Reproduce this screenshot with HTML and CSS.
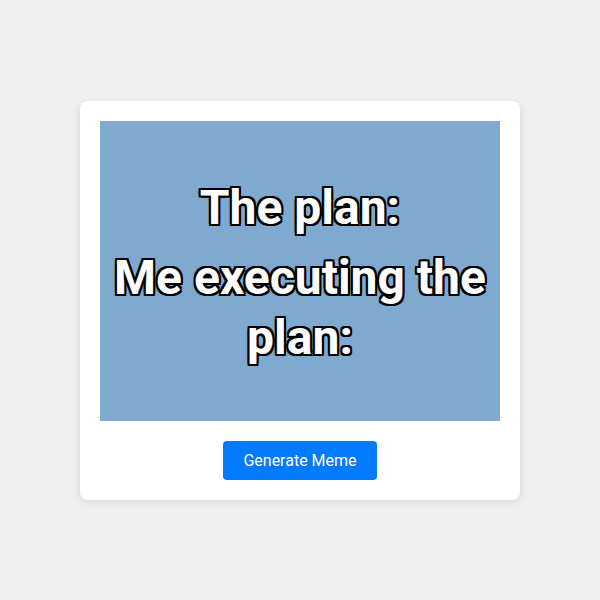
FILE: index.html
```html
<!DOCTYPE html>
<html>
<head>
<meta charset="utf-8">
<link rel="stylesheet" href="styles.css">
</head>
<body>
<div class="card">
  <div class="meme">
    <div class="meme-text">The plan:</div>
    <div class="meme-text">Me executing the plan:</div>
  </div>
  <button class="btn">Generate Meme</button>
</div>
</body>
</html>
```
FILE: styles.css
```css
html, body {
  margin: 0;
  padding: 0;
}
body {
  background: #f0f0f0;
  font-family: Roboto, "Liberation Sans", sans-serif;
  width: 600px;
  height: 600px;
  display: flex;
  align-items: center;
  justify-content: center;
}
.card {
  width: 400px;
  padding: 20px;
  background: #fff;
  border-radius: 8px;
  box-shadow: 0 2px 10px rgba(0, 0, 0, 0.1);
  display: flex;
  flex-direction: column;
  align-items: center;
  gap: 20px;
}
.meme {
  width: 400px;
  height: 300px;
  box-sizing: border-box;
  padding-top: 4px;
  background: #7fa9cf;
  display: flex;
  flex-direction: column;
  align-items: center;
  justify-content: center;
  gap: 10px;
}
.meme-text {
  color: #fff;
  font-weight: 700;
  font-size: 48px;
  line-height: 1.25;
  text-align: center;
  text-shadow:
    2px 2px 0 #000, -2px -2px 0 #000, 2px -2px 0 #000, -2px 2px 0 #000,
    2px 0 0 #000, -2px 0 0 #000, 0 2px 0 #000, 0 -2px 0 #000;
}
.btn {
  background: #007bff;
  color: #fff;
  border: none;
  border-radius: 4px;
  font-family: Roboto, "Liberation Sans", sans-serif;
  font-size: 16px;
  padding: 10px 20px;
  cursor: pointer;
}
```
